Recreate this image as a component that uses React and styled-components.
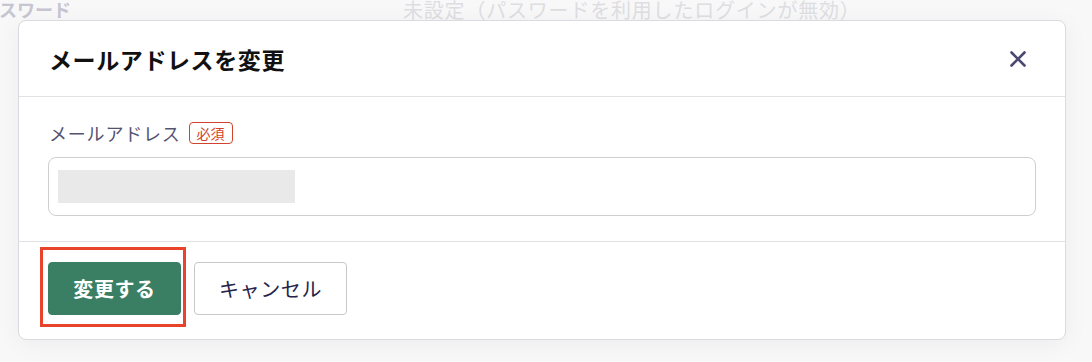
import React from 'react';
import styled, { createGlobalStyle } from 'styled-components';

const GlobalStyle = createGlobalStyle`
  *, *::before, *::after {
    box-sizing: border-box;
  }
  html, body {
    margin: 0;
    padding: 0;
    background: #f8f8f9;
    font-family: "Noto Sans CJK JP", "Noto Sans", sans-serif;
  }
`;

const Page = styled.div`
  position: relative;
  width: 1092px;
  height: 362px;
  overflow: hidden;
  background: #f8f8f9;
`;

const BackRow = styled.div`
  display: flex;
  align-items: center;
  height: 24px;
  margin-top: -3px;
`;

const BackLabel = styled.span`
  margin-left: -19px;
  width: 422px;
  font-size: 18px;
  font-weight: 700;
  color: #c6c5d2;
`;

const BackValue = styled.span`
  font-size: 20px;
  letter-spacing: 0.8px;
  color: #dedee2;
`;

const Dialog = styled.div`
  position: absolute;
  left: 18px;
  top: 20px;
  width: 1048px;
  height: 320px;
  background: #fff;
  border: 1px solid #dadae0;
  border-radius: 8px;
  box-shadow: 0 4px 24px rgba(0, 0, 0, 0.05);
  display: flex;
  flex-direction: column;
`;

const Header = styled.div`
  display: flex;
  align-items: center;
  justify-content: space-between;
  height: 76px;
  padding: 0 35px 0 30px;
  border-bottom: 1px solid #e2e2e6;
`;

const Title = styled.h2`
  margin: 0;
  font-size: 23px;
  letter-spacing: 0.6px;
  font-weight: 700;
  color: #111;
`;

const CloseButton = styled.button`
  border: none;
  background: none;
  padding: 0;
  width: 24px;
  height: 24px;
  display: flex;
  align-items: center;
  justify-content: center;
`;

const Body = styled.div`
  padding: 23px 29px 25px 29px;
  border-bottom: 1px solid #e2e2e6;
`;

const LabelRow = styled.div`
  display: flex;
  align-items: center;
  gap: 8px;
  margin-bottom: 11px;
  padding-left: 1px;
`;

const Label = styled.span`
  font-size: 18px;
  letter-spacing: 0.8px;
  color: #55536f;
`;

const Required = styled.span`
  font-size: 14px;
  line-height: 20px;
  padding: 0 7px;
  color: #d1432c;
  border: 1px solid #d1432c;
  border-radius: 4px;
`;

const Input = styled.div`
  height: 59px;
  border: 1px solid #cfcfd3;
  border-radius: 8px;
  display: flex;
  align-items: center;
  padding-left: 9px;
`;

const Masked = styled.div`
  width: 237px;
  height: 33px;
  background: #e9e9e9;
`;

const Footer = styled.div`
  display: flex;
  align-items: center;
  gap: 13px;
  padding: 20px 29px;
`;

const Highlight = styled.div`
  position: relative;
  display: flex;

  &::after {
    content: '';
    position: absolute;
    left: -8px;
    top: -15px;
    width: 146px;
    height: 80px;
    border: 3px solid #e8442b;
  }
`;

const Button = styled.button`
  height: 53px;
  padding: 0;
  font-family: inherit;
  font-size: 20px;
  letter-spacing: 0.6px;
  font-weight: ${p => (p.$primary ? 700 : 400)};
  color: ${p => (p.$primary ? '#fff' : '#25234a')};
  background: ${p => (p.$primary ? '#3a7f63' : '#fff')};
  border: 1px solid ${p => (p.$primary ? '#3a7f63' : '#c8c8cc')};
  border-radius: 4px;
  width: ${p => p.$width}px;
`;

export default function App() {
  return (
    <Page>
      <GlobalStyle />
      <BackRow>
        <BackLabel>パスワード</BackLabel>
        <BackValue>未設定（パスワードを利用したログインが無効）</BackValue>
      </BackRow>
      <Dialog>
        <Header>
          <Title>メールアドレスを変更</Title>
          <CloseButton aria-label="閉じる">
            <svg width="18" height="18" viewBox="0 0 18 18">
              <path d="M2.5 2.5L15.5 15.5M15.5 2.5L2.5 15.5" stroke="#4a4870" strokeWidth="2.6" strokeLinecap="round" />
            </svg>
          </CloseButton>
        </Header>
        <Body>
          <LabelRow>
            <Label>メールアドレス</Label>
            <Required>必須</Required>
          </LabelRow>
          <Input>
            <Masked />
          </Input>
        </Body>
        <Footer>
          <Highlight>
            <Button $primary $width={133}>変更する</Button>
          </Highlight>
          <Button $width={153}>キャンセル</Button>
        </Footer>
      </Dialog>
    </Page>
  );
}
